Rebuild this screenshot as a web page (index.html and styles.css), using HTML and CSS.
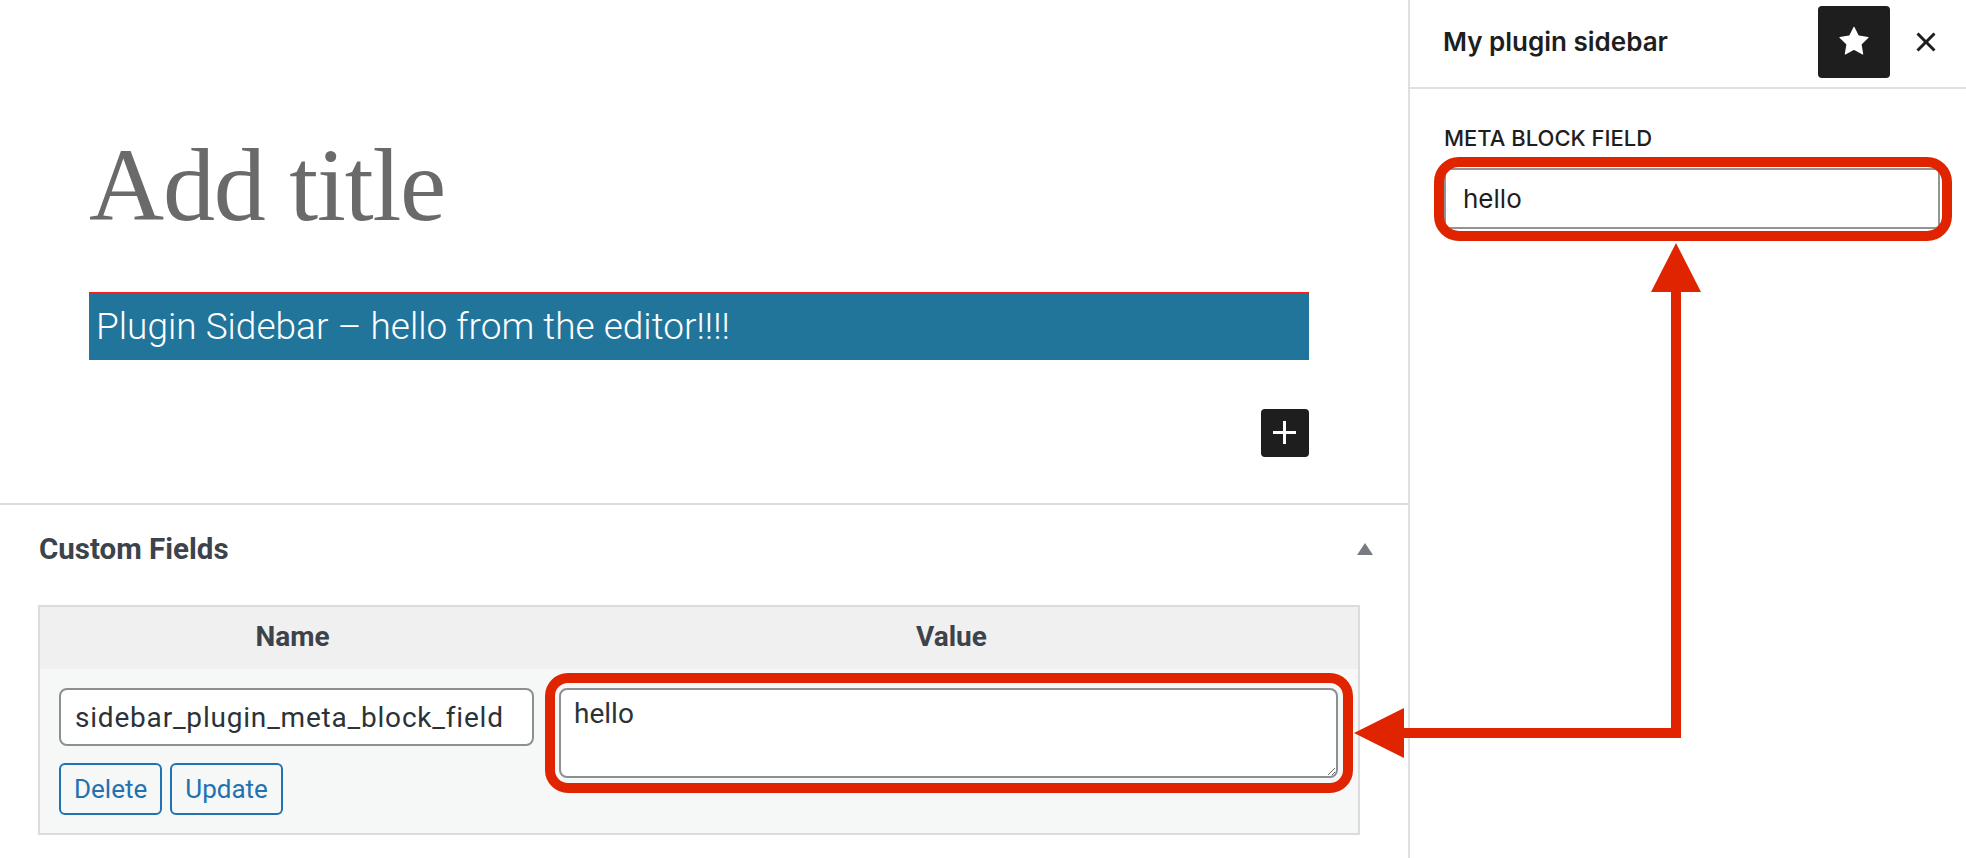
FILE: index.html
```html
<!DOCTYPE html>
<html lang="en">
<head>
<meta charset="utf-8">
<title>Editor – My plugin sidebar</title>
<link rel="stylesheet" href="styles.css">
</head>
<body>
<div class="app">
  <main class="editor">
    <section class="canvas">
      <div class="content">
        <h1 class="title-placeholder">Add title</h1>
        <p class="blue-block">Plugin Sidebar – hello from the editor!!!!</p>
        <div class="inserter-row">
          <button class="inserter" aria-label="Add block">
            <svg viewBox="0 0 24 24" width="48" height="48"><path d="M11 12.5V17.5H12.5V12.5H17.5V11H12.5V6H11V11H6V12.5H11Z" fill="#fff"/></svg>
          </button>
        </div>
      </div>
    </section>
    <section class="metabox">
      <div class="metabox-header">
        <h2 class="metabox-title">Custom Fields</h2>
        <span class="toggle"></span>
      </div>
      <div class="cf-table">
        <div class="cf-head">
          <div>Name</div>
          <div>Value</div>
        </div>
        <div class="cf-row">
          <div class="cf-name">
            <input class="name-input" type="text" value="sidebar_plugin_meta_block_field">
            <div class="cf-actions">
              <button class="cf-btn">Delete</button>
              <button class="cf-btn">Update</button>
            </div>
          </div>
          <div class="cf-value">
            <textarea class="value-input">hello</textarea>
          </div>
        </div>
      </div>
    </section>
  </main>
  <aside class="sidebar">
    <div class="sidebar-header">
      <h2 class="sidebar-title">My plugin sidebar</h2>
      <button class="star-btn" aria-label="Pinned">
        <svg viewBox="0 0 24 24" width="48" height="48"><path fill="#fff" d="M11.776 4.454a.25.25 0 01.448 0l2.069 4.192a.25.25 0 00.188.137l4.626.672a.25.25 0 01.139.426l-3.348 3.263a.25.25 0 00-.072.222l.79 4.607a.25.25 0 01-.362.263l-4.138-2.175a.25.25 0 00-.232 0l-4.138 2.175a.25.25 0 01-.363-.263l.79-4.607a.25.25 0 00-.071-.222L4.754 9.881a.25.25 0 01.139-.426l4.626-.672a.25.25 0 00.188-.137l2.069-4.192z"/></svg>
      </button>
      <button class="close-btn" aria-label="Close">
        <svg viewBox="0 0 24 24" width="48" height="48"><path fill="#1e1e1e" d="M12 13.06l3.712 3.713 1.061-1.06L13.061 12l3.712-3.712-1.06-1.06L12 10.938 8.288 7.227l-1.061 1.06L10.939 12l-3.712 3.712 1.06 1.061L12 13.061z"/></svg>
      </button>
    </div>
    <div class="panel">
      <label class="panel-label" for="meta-field">META BLOCK FIELD</label>
      <input id="meta-field" class="panel-input" type="text" value="hello">
    </div>
  </aside>
  <svg class="annotations" viewBox="0 0 1966 858" width="1966" height="858">
    <rect x="1439" y="162" width="508" height="74" rx="20" fill="none" stroke="#e02400" stroke-width="10"/>
    <rect x="550" y="678" width="798" height="110" rx="18" fill="none" stroke="#e02400" stroke-width="10"/>
    <polyline points="1676,288 1676,733 1402,733" fill="none" stroke="#e02400" stroke-width="10" stroke-linejoin="miter"/>
    <polygon points="1676,243 1701,292 1651,292" fill="#e02400"/>
    <polygon points="1354,733 1404,708 1404,758" fill="#e02400"/>
  </svg>
</div>
</body>
</html>
```
FILE: styles.css
```css
html, body {
  margin: 0;
  padding: 0;
}
body {
  width: 1966px;
  height: 858px;
  overflow: hidden;
  background: #fff;
  font-family: Roboto, "Liberation Sans", sans-serif;
}
.app {
  position: relative;
  display: flex;
  height: 858px;
}
.editor {
  width: 1408px;
  flex: none;
}
.canvas {
  height: 503px;
  box-sizing: border-box;
  padding-top: 133px;
}
.content {
  margin-left: 89px;
  width: 1220px;
}
.title-placeholder {
  margin: 0;
  font-family: "Liberation Serif", serif;
  font-weight: 400;
  font-size: 104px;
  line-height: 104px;
  letter-spacing: -1.2px;
  color: #6a6a6a;
}
.blue-block {
  margin: 55px 0 0;
  height: 68px;
  box-sizing: border-box;
  border: 1px dotted #ff1a1a;
  background: #21759b;
  color: #fff;
  font-family: Roboto, sans-serif;
  font-weight: 300;
  font-size: 37px;
  line-height: 68px;
  letter-spacing: 0;
  padding-left: 6px;
}
.inserter-row {
  display: flex;
  justify-content: flex-end;
  margin-top: 49px;
}
.inserter {
  width: 48px;
  height: 48px;
  border: 0;
  border-radius: 4px;
  background: #1e1e1e;
  display: flex;
  align-items: center;
  justify-content: center;
  padding: 0;
}
.metabox {
  border-top: 2px solid #dcdcde;
}
.metabox-header {
  display: flex;
  align-items: center;
  justify-content: space-between;
  padding: 26px 35px 0 39px;
}
.metabox-title {
  margin: 0;
  font-family: Roboto, sans-serif;
  font-weight: 700;
  font-size: 29.5px;
  line-height: 36px;
  color: #3c434a;
}
.toggle {
  width: 0;
  height: 0;
  border-left: 8px solid transparent;
  border-right: 8px solid transparent;
  border-bottom: 12px solid #787c82;
}
.cf-table {
  margin: 38px 48px 0 38px;
  border: 2px solid #dcdcde;
}
.cf-head {
  display: grid;
  grid-template-columns: 505px 1fr;
  align-items: center;
  height: 62px;
  box-sizing: border-box;
  padding-bottom: 4px;
  background: #f0f0f1;
  text-align: center;
  font-weight: 700;
  font-size: 28px;
  color: #3c434a;
}
.cf-row {
  display: grid;
  grid-template-columns: 505px 1fr;
  background: #f6f7f7;
}
.cf-name {
  padding: 19px 11px 18px 19px;
}
.name-input {
  display: block;
  width: 100%;
  height: 58px;
  box-sizing: border-box;
  margin: 0;
  border: 2px solid #8c8f94;
  border-radius: 8px;
  padding: 0 14px;
  background: #fff;
  font-family: Roboto, sans-serif;
  font-size: 28px;
  letter-spacing: 0.8px;
  color: #2c3338;
}
.cf-actions {
  display: flex;
  gap: 8px;
  margin-top: 17px;
}
.cf-btn {
  height: 52px;
  margin: 0;
  padding: 0 13px;
  border: 2px solid #2271b1;
  border-radius: 6px;
  background: #f6f7f7;
  color: #2271b1;
  font-family: Roboto, sans-serif;
  font-size: 26px;
}
.cf-value {
  padding: 19px 20px 0 14px;
}
.value-input {
  display: block;
  width: 100%;
  height: 90px;
  box-sizing: border-box;
  margin: 0;
  border: 2px solid #8c8f94;
  border-radius: 8px;
  padding: 4px 13px;
  background: #fff;
  font-family: Roboto, sans-serif;
  font-size: 28px;
  line-height: 1.4;
  color: #2c3338;
}
.sidebar {
  flex: 1;
  border-left: 2px solid #e0e0e0;
  font-family: Inter, "Noto Sans", sans-serif;
  color: #1e1e1e;
}
.sidebar-header {
  height: 89px;
  box-sizing: border-box;
  border-bottom: 2px solid #e0e0e0;
  display: flex;
  align-items: center;
  padding: 0 16px 4px 33px;
}
.sidebar-title {
  margin: 0;
  flex: 1;
  font-weight: 600;
  font-size: 26px;
}
.star-btn {
  width: 72px;
  height: 72px;
  border: 0;
  border-radius: 4px;
  background: #1e1e1e;
  padding: 0;
  margin-right: 12px;
  display: flex;
  align-items: center;
  justify-content: center;
}
.close-btn {
  width: 48px;
  height: 48px;
  border: 0;
  background: transparent;
  padding: 0;
  display: flex;
  align-items: center;
  justify-content: center;
}
.panel {
  padding: 34px 26px 0 34px;
}
.panel-label {
  display: block;
  font-weight: 500;
  font-size: 22px;
  line-height: 31px;
  margin-bottom: 14px;
}
.panel-input {
  display: block;
  width: 100%;
  height: 61px;
  box-sizing: border-box;
  margin: 0;
  border: 2px solid #949494;
  border-radius: 4px;
  padding: 0 17px;
  background: #fff;
  font-family: Inter, "Noto Sans", sans-serif;
  font-size: 26px;
  color: #1e1e1e;
}
.annotations {
  position: absolute;
  top: 0;
  left: 0;
  pointer-events: none;
}
```
